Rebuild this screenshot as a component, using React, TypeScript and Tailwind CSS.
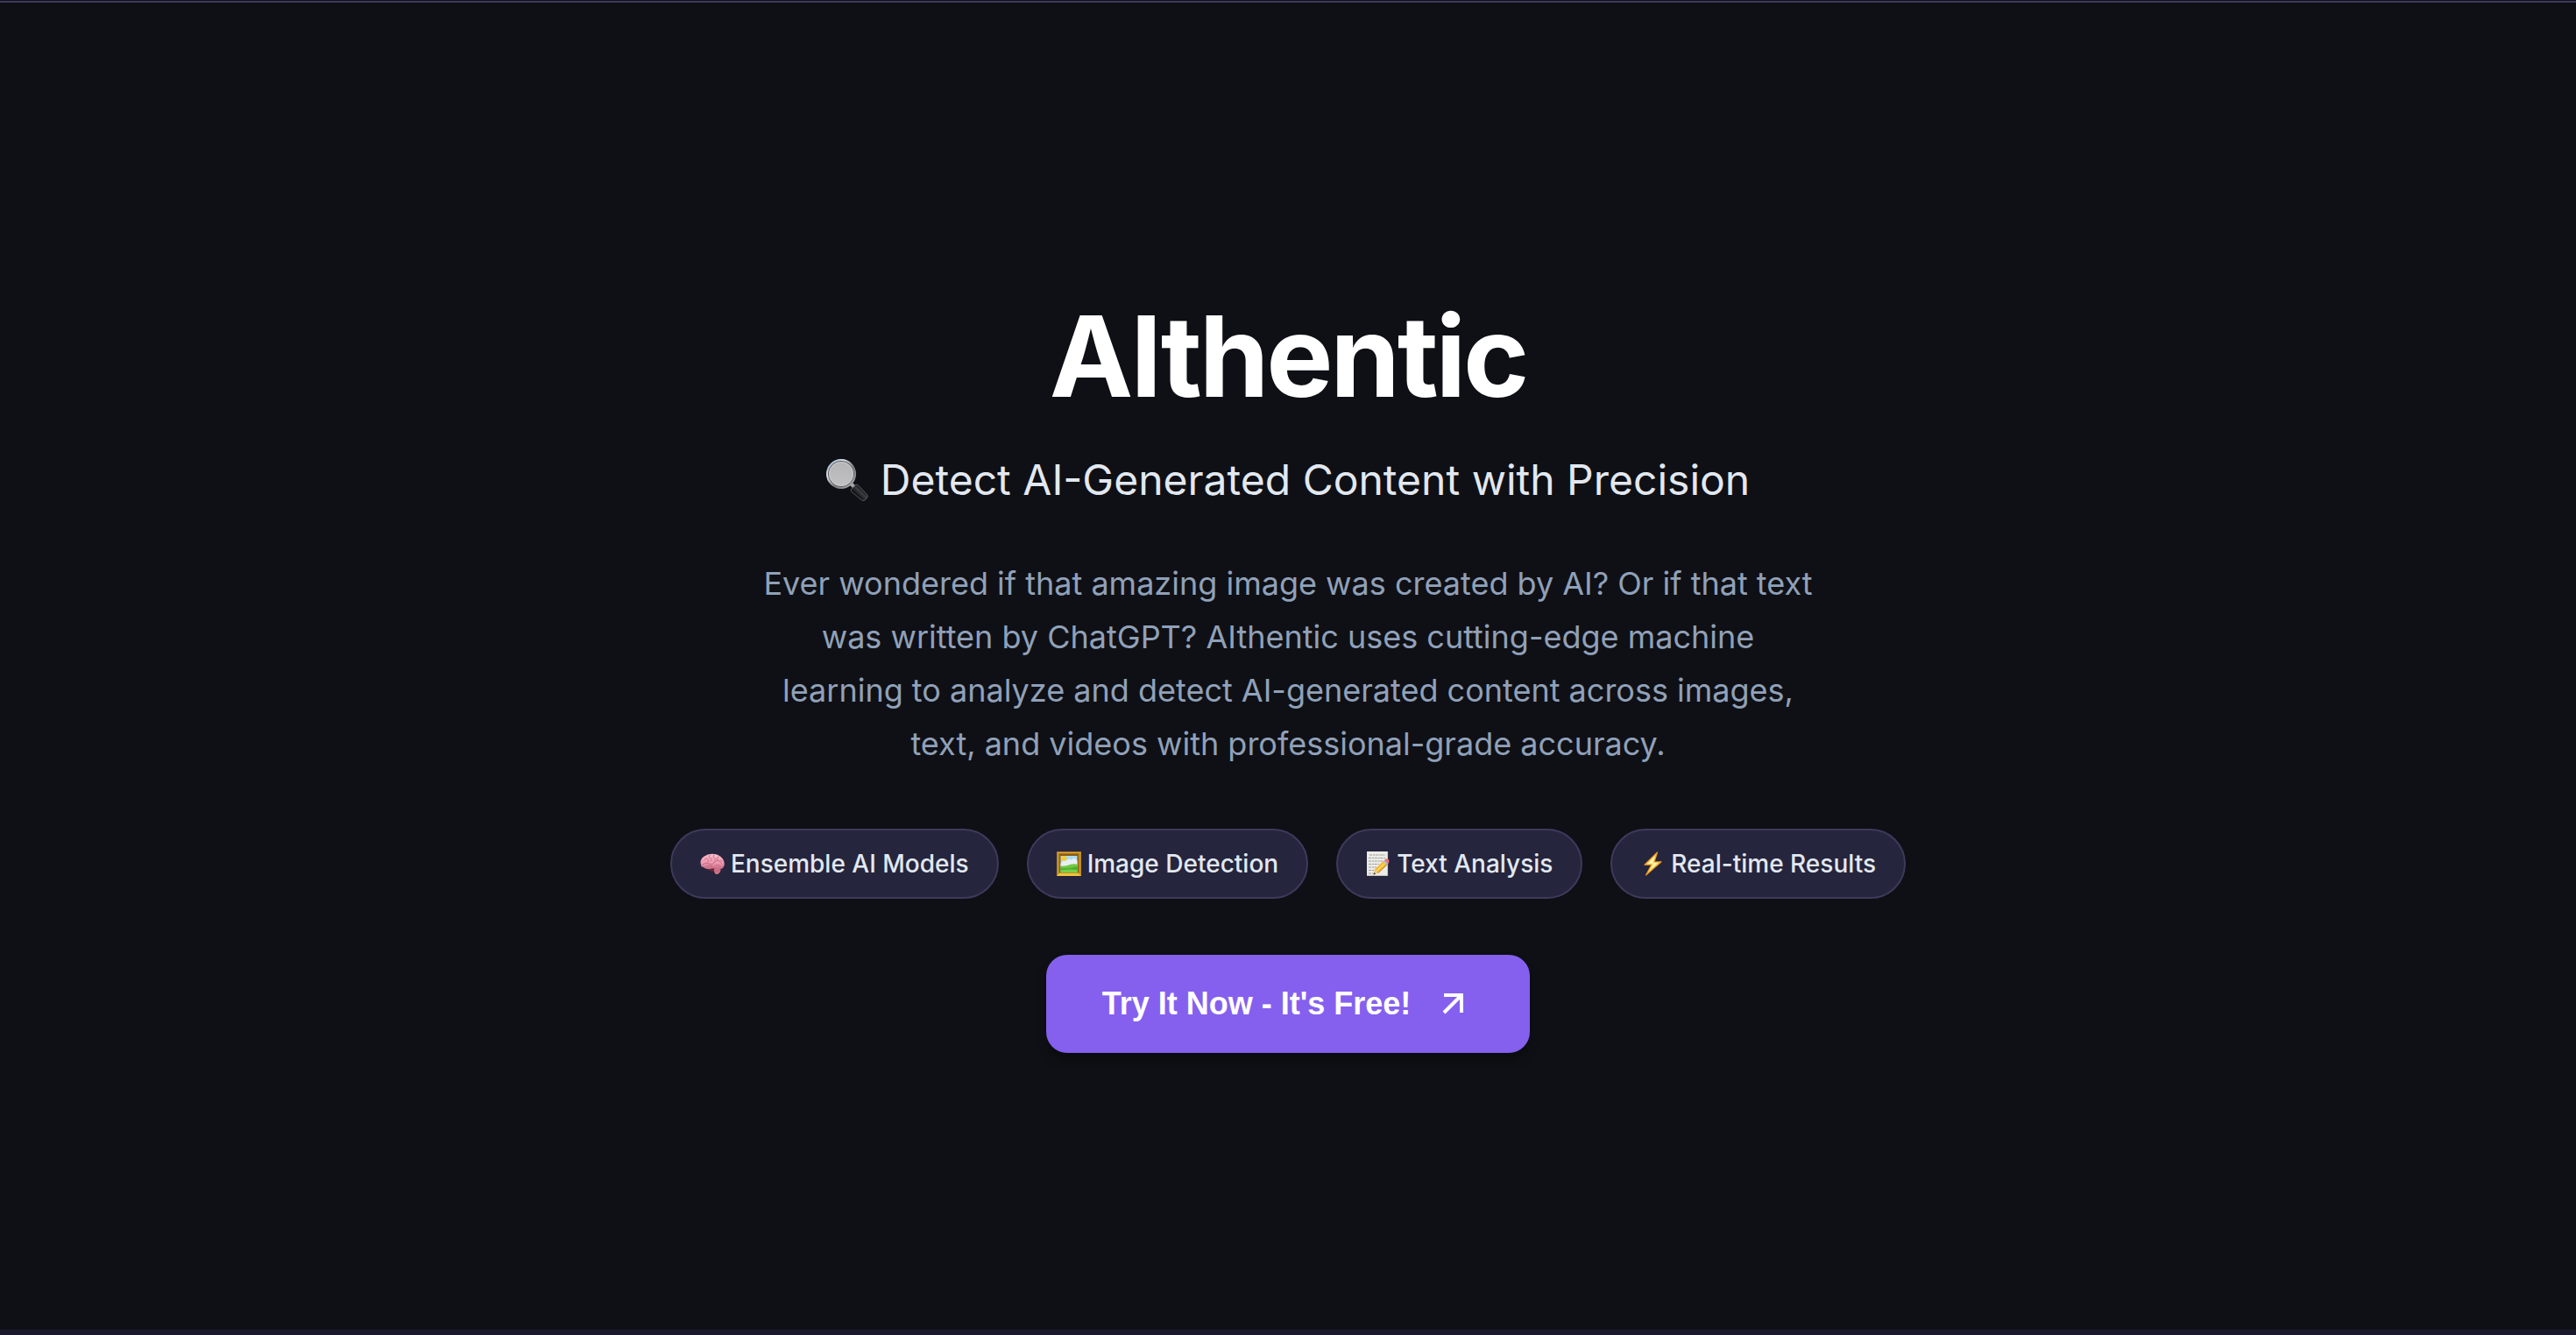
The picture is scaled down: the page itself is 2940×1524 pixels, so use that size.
import type { ReactNode } from 'react';

function MagnifierIcon() {
  return (
    <svg viewBox="0 0 48 48" className="size-12 shrink-0" aria-hidden="true">
      <defs>
        <linearGradient id="rim" x1="0" y1="0" x2="1" y2="1">
          <stop offset="0" stopColor="#7f9cc8" />
          <stop offset="0.3" stopColor="#dfe4ea" />
          <stop offset="0.6" stopColor="#77797c" />
          <stop offset="1" stopColor="#b5b5b5" />
        </linearGradient>
        <linearGradient id="glass" x1="0" y1="0" x2="0" y2="1">
          <stop offset="0" stopColor="#b4b4b6" />
          <stop offset="1" stopColor="#c2c2c4" />
        </linearGradient>
        <linearGradient id="grip" x1="0" y1="1" x2="1" y2="0">
          <stop offset="0.3" stopColor="#050505" />
          <stop offset="0.55" stopColor="#3a3e42" />
          <stop offset="0.75" stopColor="#08090a" />
        </linearGradient>
      </defs>
      <path d="M27 27l5 5" stroke="#a3a5a8" strokeWidth="4" />
      <path d="M28.500 34.500L33.500 29.500Q35 28.500 36.500 30L46.500 40.500Q48 42.500 46.500 44.500L44 47Q42 48.200 40 46.500L29 37.500Q27.500 36 28.500 34.500Z" fill="url(#grip)" stroke="#6a6d71" strokeWidth="0.8" />
      <circle cx="17" cy="17" r="16" fill="url(#glass)" stroke="url(#rim)" strokeWidth="2" />
      <circle cx="17" cy="17" r="14.600" fill="none" stroke="#4b4c4f" strokeWidth="0.900" />
      <circle cx="17" cy="17" r="13.500" fill="none" stroke="#d2d2d3" strokeWidth="0.900" />
    </svg>
  );
}

function BrainIcon() {
  return (
    <svg viewBox="0 0 28 28" className="size-7 shrink-0" aria-hidden="true">
      <defs>
        <linearGradient id="brain" x1="0" y1="0" x2="0" y2="1">
          <stop offset="0" stopColor="#f8bccb" />
          <stop offset="0.6" stopColor="#ec99ae" />
          <stop offset="1" stopColor="#c4647d" />
        </linearGradient>
      </defs>
      <path d="M9 20Q13 18 18 19L16 23Q11 23 9 20Z" fill="#6b2634" />
      <path d="M1 15C-0.500 11 2 6.500 6 5C10 2 18 2 22 5C26 7 28.500 12 27.500 16C27 19 24 21 21 20.500C17 20 14 19 12 20C8 20.500 5 19.500 4 18C2 18 1 17 1 15Z" fill="url(#brain)" />
      <path d="M16 20C18 18.500 22 19 23.500 21C23.500 24 20.500 26.500 18 26C16.500 25 15.500 22 16 20Z" fill="#cf7288" />
      <g fill="none" stroke="#c2607b" strokeWidth="0.8" strokeLinecap="round">
        <path d="M3 15Q6 12 10 14T17 12T25 14" />
        <path d="M5 10Q7 6 9 9T8 12M11 4Q9 7 12 8T12 11M16 4Q14 7 17 8T16 11M21 6Q18 8 21 10" />
        <path d="M7 17Q11 15 14 17M18 16Q21 14 23 17M17 22L22 22M23 10L25 11" />
      </g>
    </svg>
  );
}

function PictureIcon() {
  return (
    <svg viewBox="0 0 28 28" className="size-7 shrink-0" aria-hidden="true">
      <rect width="28" height="28" fill="#c08d23" />
      <path d="M0 28L5 23H23L28 28Z" fill="#f0c43c" />
      <path d="M0 0H28L23 5H5Z" fill="#a8741b" />
      <path d="M1 1.500H27" stroke="#dda936" strokeWidth="1" />
      <rect x="3" y="3" width="22" height="21.500" fill="#8a5a14" />
      <rect x="4.500" y="5" width="19" height="19" fill="#a9dcef" />
      <circle cx="8.500" cy="8" r="3" fill="#f7cb2f" />
      <path d="M4.500 14Q7 9 10 11Q14 7 17 10Q20 5 23.500 11V17H4.500Z" fill="#e8eff4" />
      <path d="M4.500 16.500Q8 17 12 16Q17 13.500 23.500 14.500V24H4.500Z" fill="#6fca42" />
      <path d="M4.500 19Q14 20 23.500 17V24H4.500Z" fill="#4fae2c" />
      <path d="M4.500 21.500Q14 20 23.500 21V24H4.500Z" fill="#78d04a" />
    </svg>
  );
}

function MemoIcon() {
  return (
    <svg viewBox="0 0 28 28" className="size-7 shrink-0" aria-hidden="true">
      <rect x="1" y="0" width="24" height="28" fill="#ecebe6" />
      <path d="M1 27.500H25M24.600 0V28" stroke="#bdbcb8" strokeWidth="0.8" />
      <g stroke="#8a8a8c" strokeWidth="0.8" strokeDasharray="3 1 2 0.700">
        <path d="M4 4H22M3 7.500H22M3 11H19M3 14.500H15M3 18H12M3 21.500H9M3 25H8" />
      </g>
      <path d="M8.500 26.500L10 20.500L20.500 10.500L24.500 14.500L14 24.500Z" fill="#f2b72d" />
      <path d="M12 22.500L22.500 12.500" stroke="#fbdc6f" strokeWidth="1.500" />
      <path d="M14 24.500L24.500 14.500" stroke="#b97c18" strokeWidth="1" />
      <path d="M8.500 26.500L10 20.500L14 24.500Z" fill="#e8c99a" />
      <path d="M8.500 26.500L9.200 24L11 25.700Z" fill="#2d2a28" />
      <path d="M19.500 11.500L21.500 9.500L25.500 13.500L23.500 15.500Z" fill="#b9bec2" />
      <path d="M21 10L22.500 8.500Q24.500 7.500 26 9.500Q27 11.500 26 12.800L25 14Z" fill="#ec7280" />
    </svg>
  );
}

function BoltIcon() {
  return (
    <svg viewBox="0 0 28 28" className="size-7 shrink-0" aria-hidden="true">
      <path d="M19.500 1L5 15.200L13 15L6.500 27L24 11.800L16 12Z" fill="#fde46b" stroke="#ee9a24" strokeWidth="1.200" strokeLinejoin="round" />
      <path d="M16.500 5.500L8.500 14L15.500 13.500L11 21L20 12.800L14 13Z" fill="#fff6b8" />
    </svg>
  );
}

function Chip({ icon, children }: { icon: ReactNode; children: ReactNode }) {
  return (
    <li className="flex h-20 items-center gap-[7px] rounded-full border-2 border-[#3d3a5c] bg-[#25253d] px-8 text-[28px] font-medium text-slate-200">
      {icon}
      <span>{children}</span>
    </li>
  );
}

export default function App() {
  return (
    <div className="flex min-h-screen flex-col bg-[#0f1015] pt-px font-['Inter',sans-serif]">
      <main className="flex flex-1 flex-col items-center justify-center border-t-2 border-[#3d3a5c] px-8 pt-4 text-center">
        <h1 className="text-[128px] leading-[141px] font-bold tracking-tight text-white">AIthentic</h1>
        <p className="mt-[39px] flex items-center gap-[14px] text-[48px] leading-[64px] text-slate-200">
          <MagnifierIcon />
          <span>Detect AI-Generated Content with Precision</span>
        </p>
        <p className="mt-14 max-w-[1210px] text-[36px] leading-[61px] text-slate-400">
          Ever wondered if that amazing image was created by AI? Or if that text was written by ChatGPT? AIthentic uses
          cutting-edge machine learning to analyze and detect AI-generated content across images, text, and videos with
          professional-grade accuracy.
        </p>
        <ul className="mt-[66px] flex flex-wrap justify-center gap-8">
          <Chip icon={<BrainIcon />}>Ensemble AI Models</Chip>
          <Chip icon={<PictureIcon />}>Image Detection</Chip>
          <Chip icon={<MemoIcon />}>Text Analysis</Chip>
          <Chip icon={<BoltIcon />}>Real-time Results</Chip>
        </ul>
        <button
          type="button"
          className="mt-16 flex h-28 items-center gap-6 rounded-3xl bg-[#8560ee] px-16 font-['Liberation_Sans',Arial,sans-serif] text-[36px] font-bold text-white shadow-[0_8px_12px_rgba(0,0,0,0.3)]"
        >
          Try It Now - It's Free!
          <svg viewBox="0 0 24 24" className="size-12" fill="none" stroke="currentColor" strokeWidth="2" aria-hidden="true">
            <path d="M7 17L17 7M7 7H17V17" />
          </svg>
        </button>
      </main>
      <div className="h-[6px] bg-[#1a1a2e]" />
    </div>
  );
}
